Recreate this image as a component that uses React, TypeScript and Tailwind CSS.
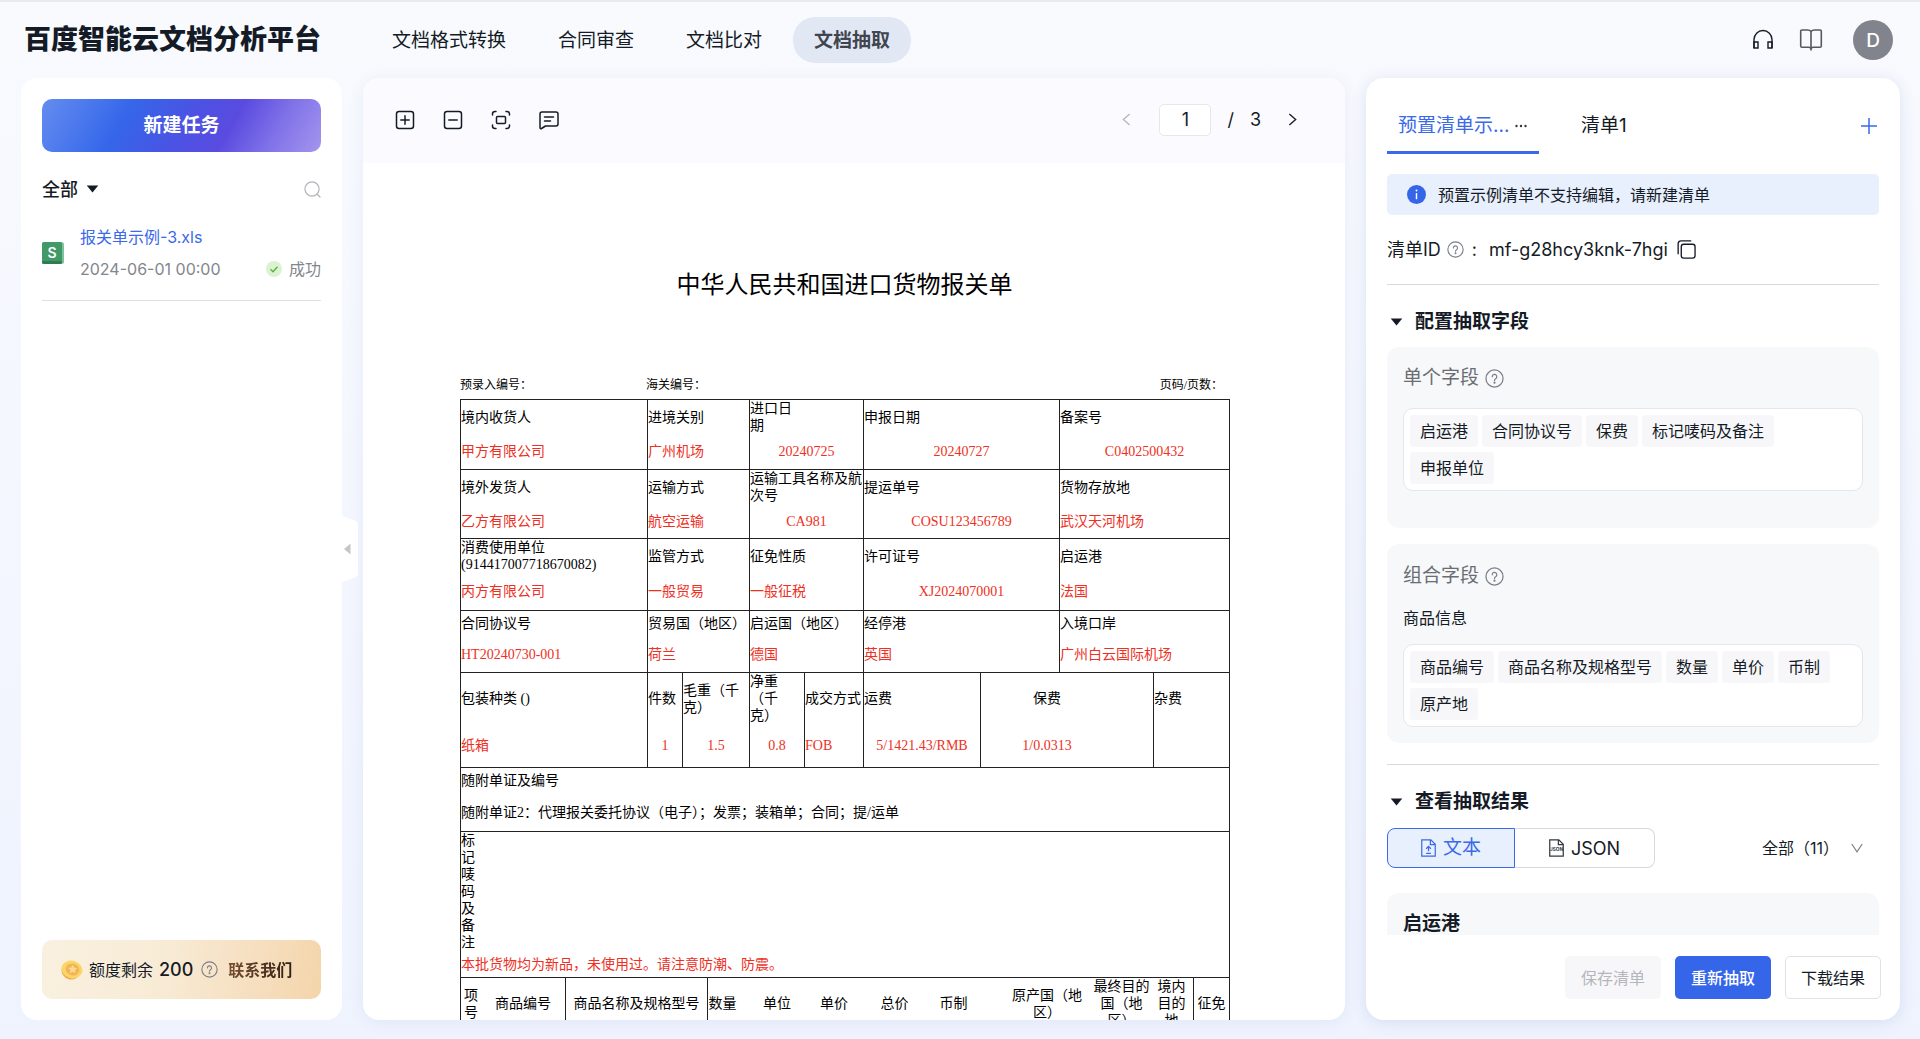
import React from "react";

const UI = "font-['Inter','Noto_Sans_CJK_SC',sans-serif]";
const DOC = "font-['Liberation_Serif','Noto_Sans_CJK_SC',serif]";

function Help({ className = "size-[19px]" }: { className?: string }) {
  return (
    <svg viewBox="0 0 20 20" className={`${className} shrink-0 text-[#7b7e86]`} fill="none" stroke="currentColor" strokeWidth="1.3" role="img" aria-label="帮助">
      <circle cx="10" cy="10" r="9" />
      <path d="M7.600 8.200a2.400 2.400 0 1 1 3.600 2c-.8.500-1.200.9-1.200 1.800" strokeLinecap="round" />
      <circle cx="10" cy="14.400" r=".5" fill="currentColor" />
    </svg>
  );
}

function Triangle({ className = "" }: { className?: string }) {
  return (
    <svg viewBox="0 0 14 9" className={`h-2 w-[13px] shrink-0 ${className}`} fill="#151b26" aria-hidden="true">
      <path d="M.5.500h13L7 8.500z" />
    </svg>
  );
}

function Header() {
  const items = ["文档格式转换", "合同审查", "文档比对"];
  return (
    <header className="flex h-[78px] shrink-0 items-center border-t-2 border-[#e9eaec] pr-[27px] pl-6">
      <h1 className="w-[297px] shrink-0 text-[27px] leading-8 font-black whitespace-nowrap">百度智能云文档分析平台</h1>
      <nav className="ml-[50px] flex gap-[10px] text-[19px] leading-6">
        {items.map((t) => (
          <a key={t} href="#" className="px-[21px] pt-3 pb-[10px]">{t}</a>
        ))}
        <a href="#" aria-current="page" className="rounded-[22px] bg-[#e1e8f4] px-[21px] pt-3 pb-[10px] font-bold text-[#41454f]">文档抽取</a>
      </nav>
      <div className="ml-auto flex items-center">
        <button aria-label="客服" className="mr-6">
          <svg viewBox="0 0 24 24" className="size-6" fill="none" stroke="#151b26" strokeWidth="1.400">
            <path d="M3 20V11.500a9 9 0 0 1 18 0V20" />
            <path d="M3 14h4v6H3zM17 14h4v6h-4z" />
          </svg>
        </button>
        <button aria-label="帮助文档" className="mr-[30px]">
          <svg viewBox="0 0 24 24" className="size-6" fill="none" stroke="#55585f" strokeWidth="1.600" strokeLinejoin="round">
            <path d="M12 3.500C11.200 2.300 10 2 8.500 2H3a1.300 1.300 0 0 0-1.300 1.300V18A1.300 1.300 0 0 0 3 19.300h6.500c1.500 0 2.500.6 2.500 2M12 3.500C12.800 2.300 14 2 15.500 2H21a1.300 1.300 0 0 1 1.300 1.300V18a1.300 1.300 0 0 1-1.300 1.300h-6.500c-1.500 0-2.500.6-2.500 2M12 3.500v19" />
          </svg>
        </button>
        <button aria-label="用户" className="size-10 rounded-full bg-[#81838d] pt-0.5 text-[19px] font-medium text-white">D</button>
      </div>
    </header>
  );
}

function Sidebar() {
  return (
    <aside className="flex w-[321px] shrink-0 flex-col rounded-2xl bg-white p-[21px]">
      <button className="h-[53px] shrink-0 rounded-[10px] bg-[linear-gradient(120deg,#648df0_0%,#3566ea_30%,#4a53e4_50%,#5a4be0_66%,#8072e8_82%,#a495ee_100%)] pt-0.5 text-[19px] font-bold text-white">新建任务</button>
      <div className="mt-[25px] flex h-6 items-center justify-between">
        <button className="flex items-center gap-2 text-[18px] font-medium">
          全部 <Triangle />
        </button>
        <button aria-label="搜索">
          <svg viewBox="0 0 18 18" className="size-[17px]" fill="none" stroke="#b4b6bb" strokeWidth="1.300">
            <circle cx="8.500" cy="8.500" r="7.500" />
            <path d="M14 14l3 3" strokeLinecap="round" />
          </svg>
        </button>
      </div>
      <div className="mt-6 flex items-center border-b border-[#dfe0e3] pb-[19px]">
        <svg viewBox="0 0 22 22" className="size-[22px] shrink-0" aria-hidden="true">
          <rect width="22" height="22" rx="2.500" fill="#7fc09d" />
          <rect width="20" height="22" rx="2" fill="#41996a" />
          <path d="M0 19h20v1a2 2 0 0 1-2 2H2a2 2 0 0 1-2-2z" fill="#2f7c52" />
          <text x="10" y="15.500" textAnchor="middle" fontSize="14" fontWeight="600" fill="#fff" fontFamily="Inter">S</text>
        </svg>
        <div className="ml-4 flex flex-1 flex-col gap-2 text-[16px] leading-6">
          <a href="#" className="text-[#3a69ea]">报关单示例-3.xls</a>
          <div className="flex items-center text-[#83868c]">
            2024-06-01 00:00
            <span className="ml-auto flex items-center gap-[7px]">
              <svg viewBox="0 0 16 16" className="size-4" aria-hidden="true">
                <circle cx="8" cy="8" r="8" fill="#dcf2d3" />
                <path d="M4.500 8.200l2.500 2.500 4.500-5" fill="none" stroke="#53b836" strokeWidth="1.400" />
              </svg>
              成功
            </span>
          </div>
        </div>
      </div>
      <div className="mt-auto flex h-[59px] items-center rounded-[10px] bg-[linear-gradient(100deg,#f9f0df_0%,#f8ecd7_40%,#f6dfc0_75%,#f4d5ab_100%)] px-[19px] text-[16px]">
        <svg viewBox="0 0 22 20" className="h-5 w-[22px] shrink-0" aria-hidden="true">
          <ellipse cx="10" cy="11" rx="9.500" ry="8.500" fill="#f0a94f" transform="rotate(15 10 11)" />
          <ellipse cx="11" cy="9.500" rx="10.500" ry="8.800" fill="#fbd667" transform="rotate(15 11 9.500)" />
          <ellipse cx="11.500" cy="9.500" rx="7" ry="6" fill="#f3b45c" transform="rotate(15 11.500 9.500)" />
          <path d="M11.800 5l1.400 2.700 3 .5-2.200 2 .6 2.900-2.800-1.400-2.800 1.300.5-2.900-2.100-2.100 3-.4z" fill="#fcdc86" />
        </svg>
        <span className="ml-[6px]">额度剩余</span>
        <span className="ml-[6px] text-[18px] font-medium">200</span>
        <span className="ml-2"><Help className="size-[17px]" /></span>
        <a href="#" className="ml-[10px] bg-gradient-to-r from-[#7a4c31] to-[#2e1f17] bg-clip-text font-bold text-transparent">联系我们</a>
      </div>
    </aside>
  );
}

function Toolbar() {
  return (
    <div className="flex h-[85px] shrink-0 items-center bg-[#fafaff] pr-12 pb-0.5 pl-[30px] text-[18px]">
      <div className="flex gap-6 text-[#151b26]">
        <button aria-label="放大">
          <svg viewBox="0 0 24 24" className="size-6" fill="none" stroke="currentColor" strokeWidth="1.500" strokeLinecap="round">
            <rect x="3.500" y="3.500" width="17" height="17" rx="2.500" />
            <path d="M12 7.800v8.400M7.800 12h8.400" />
          </svg>
        </button>
        <button aria-label="缩小">
          <svg viewBox="0 0 24 24" className="size-6" fill="none" stroke="currentColor" strokeWidth="1.500" strokeLinecap="round">
            <rect x="3.500" y="3.500" width="17" height="17" rx="2.500" />
            <path d="M7.800 12h8.400" />
          </svg>
        </button>
        <button aria-label="适应窗口">
          <svg viewBox="0 0 24 24" className="size-6" fill="none" stroke="currentColor" strokeWidth="1.500" strokeLinecap="round">
            <path d="M3.500 7V6A2.500 2.500 0 0 1 6 3.500h1M17 3.500h1A2.500 2.500 0 0 1 20.500 6v1M20.500 17v1a2.500 2.500 0 0 1-2.500 2.500h-1M7 20.500H6A2.500 2.500 0 0 1 3.500 18v-1" />
            <rect x="7.500" y="8.500" width="9" height="7" rx="1" />
          </svg>
        </button>
        <button aria-label="批注">
          <svg viewBox="0 0 24 24" className="size-6" fill="none" stroke="currentColor" strokeWidth="1.500" strokeLinecap="round" strokeLinejoin="round">
            <path d="M5 4h14a2 2 0 0 1 2 2v10a2 2 0 0 1-2 2H8.500L4.500 20.500A1 1 0 0 1 3 19.600V6a2 2 0 0 1 2-2z" />
            <path d="M7.500 9h9M7.500 13h6" />
          </svg>
        </button>
      </div>
      <div className="ml-auto flex items-center">
        <button aria-label="上一页" disabled className="mr-7">
          <svg viewBox="0 0 10 14" className="h-[13px] w-[9px]" fill="none" stroke="#b4b6bb" strokeWidth="1.400"><path d="M8.500 1l-7 6 7 6" /></svg>
        </button>
        <input aria-label="页码" defaultValue="1" className="h-8 w-[52px] rounded-[5px] border border-[#e6e7ea] bg-white text-center" />
        <span className="ml-4">/</span>
        <span className="mr-[27px] ml-4">3</span>
        <button aria-label="下一页">
          <svg viewBox="0 0 10 14" className="h-[13px] w-[9px]" fill="none" stroke="#151b26" strokeWidth="1.500"><path d="M1.500 1l7 6-7 6" /></svg>
        </button>
      </div>
    </div>
  );
}

type CellProps = {
  span: number;
  label: React.ReactNode;
  value?: string;
  labelH: string;
  valueH: string;
  center?: boolean;
  labelClass?: string;
  valueClass?: string;
};

function Cell({ span, label, value, labelH, valueH, center, labelClass = "", valueClass = "text-[#ee3024]" }: CellProps) {
  return (
    <td colSpan={span} className="border border-[#222] p-0 align-top">
      <div className={`flex items-center ${labelH} ${labelClass}`}>{label}</div>
      <div className={`flex items-center whitespace-nowrap ${valueH} ${center ? "justify-center" : ""} ${valueClass}`}>{value}</div>
    </td>
  );
}

const columns = [105, 82, 35, 25, 42, 55, 59, 117, 79, 94, 40, 36];

function Declaration() {
  const a = { labelH: "h-[34px]", valueH: "h-[35px]" };
  const b = { labelH: "h-[34px]", valueH: "h-[34px]" };
  const c = { labelH: "h-[34px]", valueH: "h-[37px]" };
  const d = { labelH: "h-[25px] whitespace-nowrap", valueH: "h-9" };
  const e = { labelH: "h-[51px]", valueH: "h-[43px]" };
  return (
    <div className={`flex flex-col items-center pr-[19px] text-black ${DOC}`}>
      <h2 className="mt-[106px] text-[24px] leading-8">中华人民共和国进口货物报关单</h2>
      <div className="mt-[73px] w-[769px]">
        <div className="flex h-[22px] items-center text-[12px]">
          <span className="w-[186px]">预录入编号：</span>
          <span>海关编号：</span>
          <span className="mr-[6px] ml-auto">页码/页数：</span>
        </div>
        <table className="mt-[3px] w-full table-fixed border-collapse text-[14px] leading-[17px]">
          <colgroup>
            {columns.map((w, i) => (
              <col key={i} style={{ width: w }} />
            ))}
          </colgroup>
          <tbody>
            <tr>
              <Cell {...a} span={2} label="境内收货人" value="甲方有限公司" />
              <Cell {...a} span={3} label="进境关别" value="广州机场" />
              <Cell {...a} span={2} label={<>进口日<br />期</>} value="20240725" center />
              <Cell {...a} span={2} label="申报日期" value="20240727" center />
              <Cell {...a} span={3} label="备案号" value="C0402500432" center />
            </tr>
            <tr>
              <Cell {...b} span={2} label="境外发货人" value="乙方有限公司" />
              <Cell {...b} span={3} label="运输方式" value="航空运输" />
              <Cell {...b} span={2} label={<>运输工具名称及航<br />次号</>} labelClass="whitespace-nowrap" value="CA981" center />
              <Cell {...b} span={2} label="提运单号" value="COSU123456789" center />
              <Cell {...b} span={3} label="货物存放地" value="武汉天河机场" />
            </tr>
            <tr>
              <Cell {...c} span={2} label={<>消费使用单位<br />(914417007718670082)</>} value="丙方有限公司" />
              <Cell {...c} span={3} label="监管方式" value="一般贸易" />
              <Cell {...c} span={2} label="征免性质" value="一般征税" />
              <Cell {...c} span={2} label="许可证号" value="XJ2024070001" center />
              <Cell {...c} span={3} label="启运港" value="法国" />
            </tr>
            <tr>
              <Cell {...d} span={2} label="合同协议号" value="HT20240730-001" />
              <Cell {...d} span={3} label="贸易国（地区）" value="荷兰" />
              <Cell {...d} span={2} label="启运国（地区）" value="德国" />
              <Cell {...d} span={2} label="经停港" value="英国" />
              <Cell {...d} span={3} label="入境口岸" value="广州白云国际机场" />
            </tr>
            <tr>
              <Cell {...e} span={2} label="包装种类 ()" value="纸箱" />
              <Cell {...e} span={1} label="件数" value="1" center />
              <Cell {...e} span={2} label={<>毛重（千<br />克）</>} value="1.5" center />
              <Cell {...e} span={1} label={<>净重<br />（千<br />克）</>} value="0.8" center />
              <Cell {...e} span={1} label="成交方式" labelClass="whitespace-nowrap" value="FOB" />
              <Cell {...e} span={1} label="运费" value="5/1421.43/RMB" center />
              <Cell {...e} span={2} label="保费" labelClass="justify-center pr-10" value="1/0.0313" center valueClass="pr-10 text-[#ee3024]" />
              <Cell {...e} span={2} label="杂费" />
            </tr>
            <tr>
              <Cell span={12} labelH="h-[25px]" valueH="h-[38px]" label="随附单证及编号" value="随附单证2：代理报关委托协议（电子）；发票；装箱单；合同；提/运单" valueClass="text-black" />
            </tr>
            <tr>
              <Cell span={12} labelH="h-[119px]" valueH="h-[26px]" label={<span className="w-[14px]">标记唛码及备注</span>} value="本批货物均为新品，未使用过。请注意防潮、防震。" />
            </tr>
            <tr>
              <td className="border border-[#222] p-0" colSpan={1}>
                <div className="flex h-[51px] items-center text-center">
                  <span className="w-5 px-[3px]">项号</span>
                  <span className="flex-1">商品编号</span>
                </div>
              </td>
              <td className="border border-[#222] p-0 text-center whitespace-nowrap" colSpan={3}>商品名称及规格型号</td>
              <td className="border border-[#222] p-0 text-center" colSpan={7}>
                <div className="flex h-[51px] items-center">
                  <span className="w-[29px]">数量</span>
                  <span className="w-20">单位</span>
                  <span className="w-[34px]">单价</span>
                  <span className="w-[87px]">总价</span>
                  <span className="w-[31px]">币制</span>
                  <span className="w-[124px] pr-[10px] pl-[42px]">原产国（地区）</span>
                  <span className="w-[57px]">最终目的国（地区）</span>
                  <span className="flex-1 px-[6px]">境内目的地</span>
                </div>
              </td>
              <td className="border border-[#222] p-0 text-center" colSpan={1}>征免</td>
            </tr>
          </tbody>
        </table>
      </div>
    </div>
  );
}

function Tags({ items }: { items: string[] }) {
  return (
    <ul className="flex flex-wrap gap-x-1 gap-y-[5px] rounded-[10px] border border-[#e6e7ea] bg-white p-[6px] pr-3 text-[16px]">
      {items.map((t) => (
        <li key={t} className="flex h-8 items-center rounded-[3px] bg-[#f7f7f9] px-[10px]">{t}</li>
      ))}
    </ul>
  );
}

function SectionTitle({ children }: { children: React.ReactNode }) {
  return (
    <h3>
      <button className="flex items-center gap-3 pl-[3px] text-[19px] leading-6 font-bold">
        <Triangle /> {children}
      </button>
    </h3>
  );
}

function FieldPanel() {
  return (
    <aside className="flex w-[534px] shrink-0 flex-col rounded-[18px] bg-white pt-[21px] shadow-[0_2px_16px_rgba(60,90,160,0.14)]">
      <div className="flex min-h-0 flex-1 flex-col overflow-hidden px-[21px]">
        <div className="flex h-[55px] shrink-0 text-[19px]">
          <div className="flex w-[152px] items-center border-b-[3px] border-[#3a69ea] pt-0.5 pl-[11px]">
            <button className="text-[#3a69ea]">预置清单示...</button>
            <button aria-label="更多" className="ml-auto pr-3">
              <svg viewBox="0 0 12 4" className="h-1 w-3" fill="#33373f"><circle cx="1.500" cy="2" r="1.200" /><circle cx="6" cy="2" r="1.200" /><circle cx="10.500" cy="2" r="1.200" /></svg>
            </button>
          </div>
          <button className="ml-[42px] border-b-[3px] border-transparent pt-0.5">清单1</button>
          <button aria-label="新建清单" className="mr-[2px] ml-auto border-b-[3px] border-transparent pt-0.5">
            <svg viewBox="0 0 16 16" className="size-4" stroke="#3a69ea" strokeWidth="1.500"><path d="M8 0v16M0 8h16" /></svg>
          </button>
        </div>
        <div role="status" className="mt-5 flex h-[41px] shrink-0 items-center rounded-[5px] bg-[#e8effd] pl-5 text-[16px]">
          <svg viewBox="0 0 20 20" className="mr-3 size-[19px]" aria-hidden="true">
            <circle cx="10" cy="10" r="10" fill="#3566ea" />
            <circle cx="10" cy="5.800" r="1" fill="#fff" />
            <path d="M10 8.500v6.500" stroke="#fff" strokeWidth="1.500" />
          </svg>
          预置示例清单不支持编辑，请新建清单
        </div>
        <div className="mt-[22px] flex h-6 shrink-0 items-center text-[18px]">
          清单ID
          <span className="mr-2 ml-[6px]"><Help className="size-[17px]" /></span>:
          <span className="mr-[9px] ml-[12px]">mf-g28hcy3knk-7hgi</span>
          <button aria-label="复制">
            <svg viewBox="0 0 20 20" className="size-[19px]" fill="none" stroke="#151b26" strokeWidth="1.400">
              <rect x="4.500" y="4.500" width="14.500" height="14.500" rx="2.500" />
              <path d="M1.200 14.500V4a3 3 0 0 1 3-3h10.300" strokeLinecap="round" />
            </svg>
          </button>
        </div>
        <hr className="mt-[23px] mb-[25px] border-[#d9dadd]" />
        <SectionTitle>配置抽取字段</SectionTitle>
        <section className="mt-[13px] rounded-xl bg-[#f7f8fa] px-4 pt-[19px] pb-[37px]">
          <h4 className="mb-[18px] flex items-center gap-[6px] text-[19px] leading-6 text-[#6a6d74]">单个字段 <Help /></h4>
          <Tags items={["启运港", "合同协议号", "保费", "标记唛码及备注", "申报单位"]} />
        </section>
        <section className="mt-4 rounded-xl bg-[#f7f8fa] px-4 pt-5 pb-4">
          <h4 className="flex items-center gap-[6px] text-[19px] leading-6 text-[#6a6d74]">组合字段 <Help /></h4>
          <p className="mt-[18px] mb-[14px] text-[16px] leading-6">商品信息</p>
          <Tags items={["商品编号", "商品名称及规格型号", "数量", "单价", "币制", "原产地"]} />
        </section>
        <hr className="mt-[21px] mb-[25px] border-[#d9dadd]" />
        <SectionTitle>查看抽取结果</SectionTitle>
        <div className="mt-[14px] flex shrink-0 items-center">
          <button aria-pressed="true" className="flex h-10 w-32 items-center justify-center gap-[7px] rounded-l-lg border border-[#3a69ea] bg-[#e8effd] text-[19px] text-[#3a69ea]">
            <svg viewBox="0 0 16 19" className="h-[18px] w-[15px]" fill="none" stroke="currentColor" strokeWidth="1.300">
              <path d="M.8.800h9.700l4.700 4.700v12.700H.8zM10 .8v5h5M8 13V8M5.500 10.300L8 7.800l2.500 2.500M5.500 15.300h5" />
            </svg>
            文本
          </button>
          <button aria-pressed="false" className="flex h-10 w-[140px] items-center justify-center gap-[7px] rounded-r-lg border border-l-0 border-[#d9dadd] text-[18px]">
            <svg viewBox="0 0 16 19" className="h-[18px] w-[15px]" fill="none" stroke="#33373f" strokeWidth="1.300">
              <path d="M.8 7V.8h9.700l4.700 4.700V7M.8 13v5.200h14.400V13M10 .8v5h5M.8 7v6M15.200 7v6" />
              <text x="8" y="12.200" textAnchor="middle" fontSize="5" fontWeight="700" fill="#33373f" stroke="none" fontFamily="Inter">JSON</text>
            </svg>
            JSON
          </button>
          <button className="mr-4 ml-auto flex items-center gap-3 text-[16px]">
            全部（11）
            <svg viewBox="0 0 12 10" className="h-[10px] w-3" fill="none" stroke="#85878f" strokeWidth="1.300"><path d="M.8 1L6 8.800 11.200 1" /></svg>
          </button>
        </div>
        <section className="mt-[25px] shrink-0 rounded-xl bg-[#f7f8fa] px-4 pt-[19px] pb-10">
          <h4 className="text-[19px] leading-6 font-bold">启运港</h4>
        </section>
      </div>
      <div className="flex shrink-0 justify-end gap-[14px] px-[19px] py-[21px] text-[16px] *:h-[43px] *:w-24 *:rounded-[5px]">
        <button disabled className="bg-[#f7f7f9] text-[#b4b6bb]">保存清单</button>
        <button className="bg-[#3566ea] font-medium text-white">重新抽取</button>
        <button className="border border-[#e1e2e5]">下载结果</button>
      </div>
    </aside>
  );
}

export default function App() {
  return (
    <div className={`flex h-screen flex-col overflow-hidden bg-gradient-to-b from-[#f8fafe] to-[#eff3fe] text-[#151b26] ${UI}`}>
      <Header />
      <div className="flex min-h-0 flex-1 gap-[21px] pr-5 pb-[19px] pl-[21px]">
        <div className="relative flex">
          <Sidebar />
          <button aria-label="收起侧栏" className="absolute top-[438px] left-full flex h-[66px] w-4 items-center justify-center">
            <svg viewBox="0 0 16 66" className="absolute inset-0 h-full w-full" aria-hidden="true">
              <path d="M0 0l14 5q2 1 2 3v50q0 2-2 3L0 66z" fill="#fff" />
              <path d="M8.500 27.500v11L2 33z" fill="#c4c6ca" />
            </svg>
          </button>
        </div>
        <main className="flex min-w-0 flex-1 flex-col overflow-hidden rounded-2xl bg-white shadow-[0_2px_16px_rgba(60,90,160,0.08)]">
          <Toolbar />
          <div className="min-h-0 flex-1 overflow-hidden">
            <Declaration />
          </div>
        </main>
        <FieldPanel />
      </div>
    </div>
  );
}
